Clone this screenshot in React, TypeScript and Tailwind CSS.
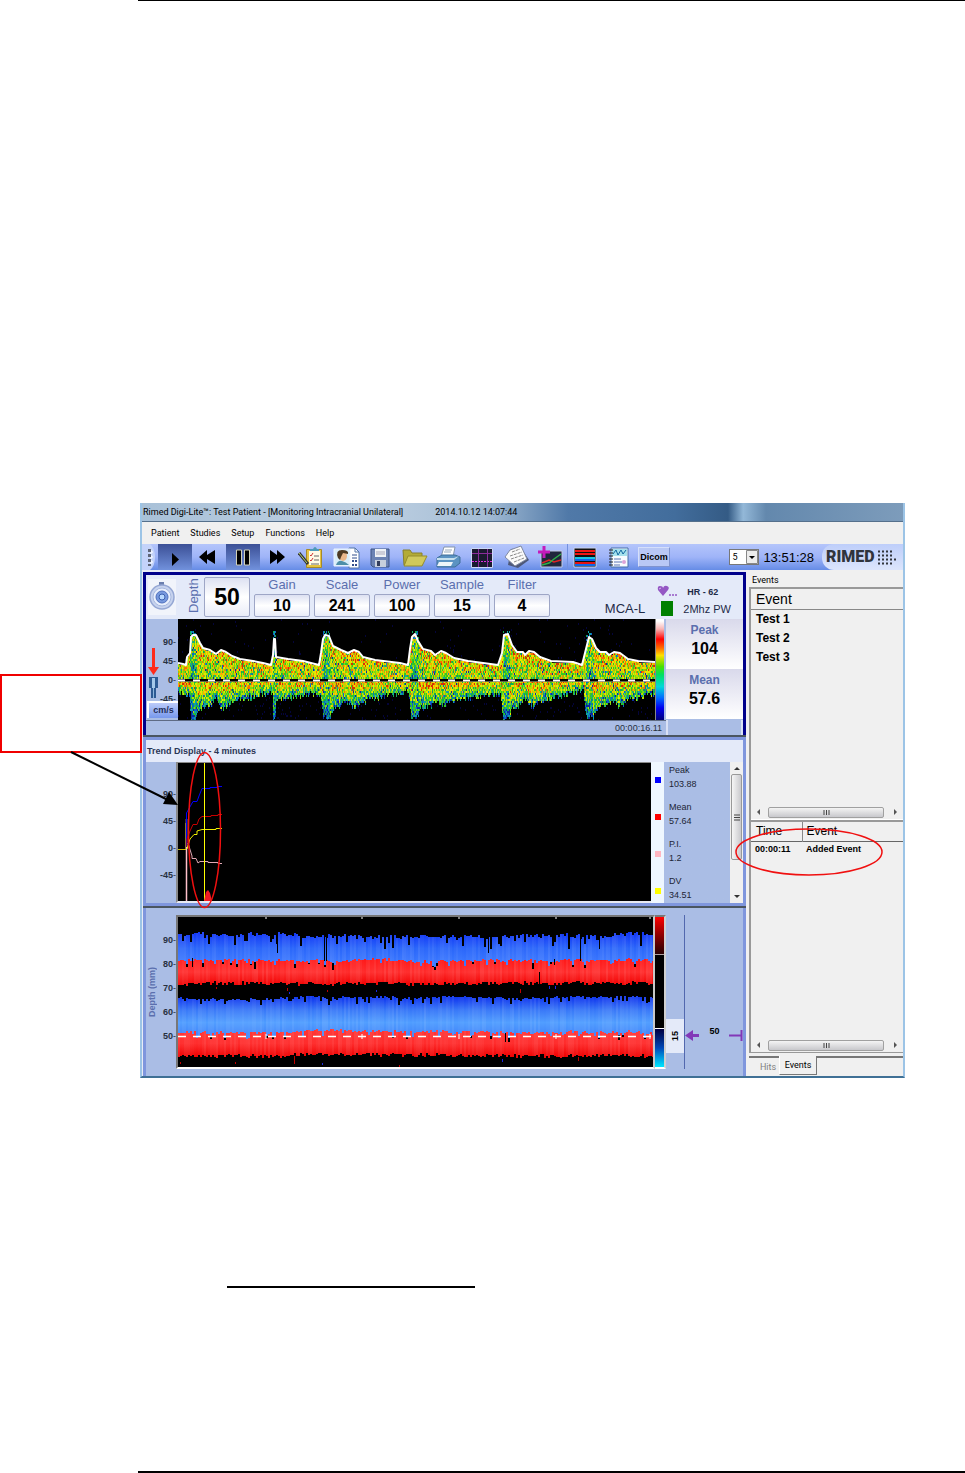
import React from 'react';

// Small seeded generator so the traces look the same on every load
function createRandom(seed: number) {
  let s = seed;
  return () => {
    s = (s * 1664525 + 1013904223) % 4294967296;
    return s / 4294967296;
  };
}

type Point = [number, number];

function valueAt(points: Point[], x: number) {
  for (let i = 1; i < points.length; i++) {
    if (x <= points[i][0]) {
      const [x0, y0] = points[i - 1];
      const [x1, y1] = points[i];
      return y0 + ((y1 - y0) * (x - x0)) / (x1 - x0);
    }
  }
  return points[points.length - 1][1];
}

const peakEnvelope: Point[] = [
  [0, 44], [5, 45], [8, 46], [9, 38], [12, 34], [13, 18], [15, 16], [18, 16], [22, 24], [25, 29], [32, 31], [38, 35], [43, 31], [48, 33], [54, 37], [62, 40], [75, 42],
  [85, 44], [93, 46], [95, 36], [96, 20], [97, 20], [98, 38], [110, 40], [125, 42], [141, 46], [143, 34], [145, 20], [147, 16], [151, 17], [155, 27],
  [163, 31], [170, 34], [176, 31], [181, 33], [185, 38], [197, 41], [222, 44], [230, 46], [232, 30], [234, 18], [237, 15], [240, 22], [245, 30], [253, 32],
  [257, 36], [263, 32], [268, 34], [276, 39], [290, 42], [305, 44], [320, 46], [324, 34], [326, 16], [330, 15], [334, 26], [339, 33], [345, 33], [347, 36],
  [351, 32], [356, 33], [362, 38], [373, 42], [395, 43], [404, 46], [408, 30], [411, 18], [414, 20], [418, 29], [422, 33], [428, 33], [431, 36], [436, 33], [442, 34],
  [450, 40], [460, 42], [477, 43],
];

const floorEnvelope: Point[] = [
  [0, 72], [11, 76], [13, 100], [18, 100], [20, 90], [30, 86], [38, 80], [42, 89], [55, 82], [75, 77], [94, 73], [95, 98], [97, 98],
  [98, 80], [120, 76], [142, 74], [145, 98], [151, 99], [154, 90], [162, 87], [168, 81], [175, 87], [190, 80], [210, 76], [230, 72], [233, 98],
  [240, 98], [243, 88], [252, 87], [258, 82], [266, 86], [280, 80], [305, 76], [322, 73], [325, 99], [331, 99], [334, 88], [340, 86], [346, 81],
  [353, 87], [370, 79], [388, 75], [405, 71], [408, 97], [415, 99], [418, 90], [426, 86], [432, 82], [440, 86], [455, 79], [477, 73],
];

const beats = [15, 96, 148, 237, 328, 411];

const palette = [
  '#04043a', '#0a2aa0', '#0b62c8', '#10a0a8', '#10a858', '#34c820',
  '#7cd812', '#b4e000', '#e8e400', '#f8b000', '#f47400', '#d83000',
];

function buildSpectrum() {
  const rand = createRandom(71);
  const paths: string[] = palette.map(() => '');
  for (let x = 0; x < 477; x++) {
    const top = valueAt(peakEnvelope, x);
    const bottom = valueAt(floorEnvelope, x) - 3 + rand() * 6;
    const onBeat = beats.some((b) => Math.abs(b - x) < (b === 96 ? 2 : 4));
    for (let y = 0; y < 101; y += 2) {
      let level = -1;
      if (y < top) {
        if (onBeat && y > 10 && rand() < 0.4) level = 2 + Math.floor(rand() * 3);
        else if (rand() < 0.012) level = 0;
      } else if (y <= bottom) {
        const depth = y < 62 ? (62 - y) / (62 - top) : (bottom - y) / (bottom - 61);
        const base = y < 62 ? 6 + depth * 2.6 : 3.6 + Math.min(depth, 0.8) * 6;
        level = base + (rand() + rand() - 1) * 4.3;
        if (onBeat) level -= 2;
        if (rand() < 0.08) level -= 4;
        level = Math.max(1, Math.min(11, Math.round(level)));
      } else if (rand() < 0.035) {
        level = 0;
      }
      if (level >= 0) paths[level] += `M${x}.5 ${y}v2`;
    }
  }
  return paths;
}

function columnBand(seed: number, top: number, bottom: number, rough: number) {
  const rand = createRandom(seed);
  let drift = 0;
  return Array.from({ length: 238 }, (_, i) => {
    drift = Math.max(-3, Math.min(3, drift + (rand() - 0.5) * 2));
    const spike = rand() < 0.2 ? rand() * rough * 1.3 : 0;
    const y = top + drift * 0.6 + rand() * rough * 0.5 + spike;
    const end = bottom - rand() * rough * 0.6 + drift * 0.3;
    return { x: i * 2, y: Math.round(y), h: Math.round(end - y), tint: rand() * 0.1 };
  });
}

const spectrum = buildSpectrum();
const envelopePath = 'M' + peakEnvelope.map((p) => p.join(' ')).join('L');

const bands = [
  { fill: 'url(#upperBlue)', columns: columnBand(5, 16, 50, 9) },
  { fill: 'url(#upperRed)', columns: columnBand(17, 43, 69, 6) },
  { fill: 'url(#lowerBlue)', columns: columnBand(29, 80, 122, 5) },
  { fill: 'url(#lowerRed)', columns: columnBand(43, 113, 140, 6) },
];

const parameters = [
  { id: 'gain', label: 'Gain', value: '10' },
  { id: 'scale', label: 'Scale', value: '241' },
  { id: 'power', label: 'Power', value: '100' },
  { id: 'sample', label: 'Sample', value: '15' },
  { id: 'filter', label: 'Filter', value: '4' },
];

const legend = [
  { label: 'Peak', value: '103.88', color: 'bg-[#0000ff]' },
  { label: 'Mean', value: '57.64', color: 'bg-[#ff0000]' },
  { label: 'P.I.', value: '1.2', color: 'bg-[#ffb6c1]' },
  { label: 'DV', value: '34.51', color: 'bg-[#ffff00]' },
];

function ToolButton({ label, pressed, children }: { label: string; pressed?: boolean; children: React.ReactNode }) {
  return (
    <button
      aria-label={label}
      className={`flex h-full w-[34px] items-center justify-center ${
        pressed ? 'bg-linear-to-b from-[#3c5096] to-[#7191dc]' : ''
      }`}
    >
      <svg width="28" height="24" viewBox="0 0 28 24">{children}</svg>
    </button>
  );
}

function Toolbar() {
  return (
    <div className="flex h-[26px] items-center bg-linear-to-b from-[#b4c5fb] via-[#9fb4f8] to-[#668ce6]">
      <svg className="h-full w-4 shrink-0" viewBox="0 0 16 26">
        <path d="M0 0H8Q13 4 13 13T8 26H0Z" fill="#c4d3fa" />
        <path d="M6 5h3v3H6zM6 10h3v3H6zM6 15h3v3H6zM6 20h3v2H6z" fill="#5f6678" />
        <path d="M9 7h1v2H8M9 12h1v2H8M9 17h1v2H8" stroke="#fff" fill="none" />
      </svg>
      <div className="flex h-full">
        <ToolButton label="Play" pressed>
          <path d="M11 8L18 14.500L11 21Z" />
        </ToolButton>
        <ToolButton label="Rewind">
          <path d="M4 12L12 5V10L20 5V19L12 14V19Z" />
        </ToolButton>
        <ToolButton label="Pause" pressed>
          <path d="M7.500 5h5v15h-5zM15.500 5h5v15h-5z" stroke="#d0d0b8" strokeWidth="1" />
        </ToolButton>
        <ToolButton label="Forward">
          <path d="M7 5L14 10V5L22 12L14 19V14L7 19Z" />
        </ToolButton>
      </div>
      <div className="ml-px flex h-full border-r border-[#7390de]">
        <ToolButton label="Protocol">
          <path d="M8.500 4.500H23.500V22.500H8.500Z" fill="#e6c440" stroke="#a58a2a" />
          <path d="M11 6H22V20H11Z" fill="#fffbe6" />
          <path d="M12 6V4H15Q17 0 19 4H21V6Z" fill="#4e9ab8" />
          <path d="M12 10l1 1 2-3M12 15l1 1 2-3" stroke="#c33" fill="none" />
          <path d="M16 11h5M16 15h5M13 19h8" stroke="#666" />
          <path d="M1 8L10 19" stroke="#333" strokeWidth="3" />
          <path d="M1 8L9 18" stroke="#b8d66a" />
        </ToolButton>
        <ToolButton label="Patient card">
          <path d="M17 3h6l4 4v16H17z" fill="#fff" stroke="#5577a8" />
          <path d="M23 3v4h4" stroke="#5577a8" fill="none" />
          <path d="M2 4H18V21H2Z" fill="#d9edf8" stroke="#eef3ff" />
          <path d="M4 20Q6 15 10 16T17 20Z" fill="#4e8fa8" />
          <ellipse cx="11" cy="11" rx="4" ry="5" fill="#e8b78a" />
          <path d="M6 13Q3 5 10 5T16 9L11 8L9 12L8 15Z" fill="#4d3a22" />
          <path d="M20 10h5M20 13h5" stroke="#334f8c" />
          <path d="M20 15h2v2h-2zM23 15h2v2h-2zM20 19h2v2h-2zM23 19h2v2h-2z" fill="#334f8c" />
        </ToolButton>
        <ToolButton label="Save">
          <path d="M5 4H23V22H7L5 20Z" fill="#6b83b4" stroke="#3c5484" />
          <path d="M9 4H20V12H9Z" fill="#eef2f6" />
          <path d="M10 7h9M10 9h9" stroke="#aab" />
          <path d="M9 15H20V22H9Z" fill="#c7d0dc" />
          <path d="M11 16H14V21H11Z" fill="#333f5c" />
        </ToolButton>
        <ToolButton label="Open">
          <path d="M3 5H10L12 8H22V20H4Z" fill="#b3ab36" stroke="#88802a" />
          <path d="M8 11H27L22 21H4Z" fill="#d0c95c" stroke="#958d2c" />
        </ToolButton>
        <ToolButton label="Print">
          <path d="M10 2H21L19 12H7Z" fill="#fff" stroke="#8595ab" />
          <path d="M3 13L8 10H21L26 12V18L21 22H3Z" fill="#5b93c2" stroke="#3e6e99" />
          <path d="M3 13H20L25 11L20 15H3Z" fill="#c6e0ee" />
          <path d="M5 17H19L17 21H3Z" fill="#edf5f9" />
          <path d="M11 5h7M10 7h7" stroke="#9ab" />
        </ToolButton>
        <ToolButton label="Cursors">
          <path d="M3.500 3.500H24.500V22.500H3.500Z" fill="#1a1a30" stroke="#cdd8f6" />
          <path d="M4 8.500h20" stroke="#8a2c9c" />
          <path d="M4 16.500h20" stroke="#e02ce0" strokeDasharray="2 1" />
          <path d="M10.500 4v18M19.500 4v18" stroke="#8a2c9c" />
        </ToolButton>
        <ToolButton label="Notes">
          <path d="M9 4L19 3L27 15L16 23L6 20Z" fill="#4d5878" />
          <path d="M8 5L19 1L25 14L13 21L3 12Z" fill="#fafafa" stroke="#7f89a3" />
          <path d="M10 7l8-3M8 11l12-4M9 14l12-4M12 17l10-4" stroke="#888" strokeDasharray="3 1" />
        </ToolButton>
        <ToolButton label="Add trend">
          <path d="M5 6H26V22H5Z" fill="#20273c" stroke="#c4cde6" />
          <path d="M6 18L13 15L18 17L25 15" stroke="#dc2525" strokeWidth="1.500" fill="none" />
          <path d="M6 20L13 18L18 14L25 9" stroke="#2eb148" strokeWidth="1.500" fill="none" />
          <path d="M8 1v12M2 7h12" stroke="#c41bbb" strokeWidth="3" />
        </ToolButton>
      </div>
      <div className="flex h-full">
        <ToolButton label="M-mode">
          <path d="M3 3H25V22H3Z" fill="#111" stroke="#cbd4ef" />
          <path d="M4 6h20M4 9h20" stroke="#f01616" strokeWidth="2" />
          <path d="M4 13h20" stroke="#18c6e6" strokeWidth="2" />
          <path d="M4 15h20M4 20h20" stroke="#0d65e8" strokeWidth="2" />
          <path d="M4 18h20" stroke="#e41212" strokeWidth="2" />
        </ToolButton>
        <ToolButton label="Report">
          <path d="M6 3H23V22H6Z" fill="#f7fbff" stroke="#4670a8" />
          <path d="M7 4H22V11H7Z" fill="#a5e0ec" />
          <path d="M8 9l3-4 2 5 3-5 2 4 3-4" stroke="#1267a2" fill="none" />
          <path d="M9 14h7M9 17h8M9 20h6" stroke="#5d76b5" />
          <path d="M4 5h4M4 8h4M4 11h4M4 14h4M4 17h4M4 20h4" stroke="#222" />
          <circle cx="19" cy="17" r="2" fill="#dca3d8" />
        </ToolButton>
      </div>
      <button className="ml-0.5 h-5 w-8 border border-[#8094cf] border-t-[#d5dffb] border-l-[#d5dffb] bg-[#b9c8f5] text-[9px] leading-none font-bold">
        Dicom
      </button>
      <div className="ml-auto flex h-full items-center">
        <div className="relative flex">
          <select
            aria-label="Display seconds"
            defaultValue="5"
            className="h-4 w-[30px] appearance-none border border-[#777] bg-white pl-0.5 font-['Roboto',sans-serif] text-[9px] leading-none"
          >
            <option>5</option>
            <option>10</option>
          </select>
          <svg className="pointer-events-none absolute top-px right-px" width="12" height="14" viewBox="0 0 12 14">
            <path d="M0.500 0.500H11.500V13.500H0.500Z" fill="#ececec" stroke="#888" />
            <path d="M3 6H9L6 9Z" />
          </svg>
        </div>
        <time className="mr-2 ml-1 text-[13px] leading-none">13:51:28</time>
        <div className="flex h-full w-[81px] items-center justify-between rounded-l-xl bg-linear-to-b from-[#becefa] to-[#dce5fc] pr-1.5 pl-1 text-[#30343c]">
          <span className="font-['Roboto',sans-serif] text-[16px] leading-none font-black">RIMED</span>
          <svg className="shrink-0" width="19" height="15" viewBox="0 0 19 15">
            <path
              d="M0 1.500h14M0 5.500h14M0 9.500h18M0 13.500h14"
              stroke="currentColor"
              strokeWidth="2"
              strokeDasharray="2 2"
            />
          </svg>
        </div>
      </div>
    </div>
  );
}

function Axis({ labels, className, rowClass }: { labels: string[]; className: string; rowClass: string }) {
  return (
    <div className={`text-right text-[9px] font-bold text-[#26303f] ${className}`}>
      {labels.map((label) => (
        <div key={label} className={`flex items-center justify-end ${rowClass}`}>
          {label}
          <span className="font-normal">-</span>
        </div>
      ))}
    </div>
  );
}

function SpectrumPanel() {
  return (
    <section className="border-x-[3px] border-t-[3px] border-[#00008b] bg-[#aabde5]">
      <div className="flex h-11 items-start bg-[#e4eaf9] pl-0.5">
        <button aria-label="Sound" className="mt-1 flex h-9 w-7 items-center justify-center bg-[#f1f4fb]">
          <svg width="28" height="30" viewBox="0 0 28 30">
            <path d="M11 0h5v4h-5z" fill="#6b7fae" />
            <circle cx="14" cy="15" r="12" fill="#c7d3ee" stroke="#95a7d4" strokeWidth="1.500" />
            <circle cx="14" cy="15" r="9" fill="#e9effc" stroke="#a8b9df" />
            <circle cx="14" cy="15" r="6" fill="#7799de" stroke="#4f70bd" />
            <circle cx="14" cy="15" r="3" fill="#b8d8ff" stroke="#3c60ae" />
          </svg>
        </button>
        <label
          htmlFor="depth"
          className="ml-2.5 flex h-[42px] w-4 rotate-180 items-center justify-center text-[13px] leading-4 text-[#5b6fae] [writing-mode:vertical-rl]"
        >
          Depth
        </label>
        <input
          id="depth"
          defaultValue="50"
          className="mt-0.5 ml-0.5 h-10 w-[46px] rounded-xs border border-[#9ea6c6] bg-linear-to-b from-[#dde1f2] via-white to-[#e9ecf8] text-center text-[23px] font-bold"
        />
        <div className="ml-1 flex gap-1">
          {parameters.map((p) => (
            <div key={p.id} className="flex w-14 flex-col items-center pt-px">
              <label htmlFor={p.id} className="text-[13px] leading-[18px] text-[#5b6fae]">{p.label}</label>
              <input
                id={p.id}
                defaultValue={p.value}
                className="h-[23px] w-full rounded-xs border border-[#9ea6c6] bg-linear-to-b from-[#dde1f2] via-white to-[#e9ecf8] text-center text-[16px] leading-none font-bold"
              />
            </div>
          ))}
        </div>
        <div className="ml-auto flex h-full items-end gap-3 pr-3 pb-0.5 text-[#1e2b48]">
          <span className="text-[13px] leading-4">MCA-L</span>
          <div className="grid grid-cols-[22px_auto] gap-x-1 gap-y-px">
            <svg width="20" height="14" viewBox="0 0 20 14">
              <path d="M6 12L1 6Q0 2 3 2T6 4Q7 1 10 2T11 6Z" fill="#9457c4" />
              <path d="M4 4L2 5" stroke="#d9b7ef" />
              <path d="M12 11h2M15 11h2M18 11h2" stroke="#9457c4" strokeWidth="1.500" />
            </svg>
            <span className="pl-1 text-[9px] leading-4 font-bold">HR - 62</span>
            <div className="ml-1 h-[15px] w-3 bg-[#008000]" />
            <span className="text-[11px] leading-4">2Mhz PW</span>
          </div>
        </div>
      </div>
      <div className="flex h-[101px]">
        <div className="relative w-8 shrink-0 overflow-hidden">
          <Axis labels={['90', '45', '0', '-45']} className="pt-3.5 pr-0.5" rowClass="h-[19px]" />
          <svg className="absolute top-7 left-0.5" width="12" height="54" viewBox="0 0 12 54">
            <path d="M4 1H7V20H11L5.500 28L0 20H4Z" fill="#ff2a1a" />
            <path d="M1 30H10V41H8V51H3V41H1Z" fill="#2c5a94" />
            <path d="M4 31H7V41H4Z" fill="#a4c8ea" />
            <path d="M5 41H6V51H5Z" fill="#8db6de" />
          </svg>
          <button className="absolute bottom-0.5 left-px h-[17px] w-[31px] border-t-2 border-l-2 border-white bg-linear-to-b from-[#bccbfa] to-[#7898ec] text-[9px] leading-none font-bold text-[#1f2c55]">
            cm/s
          </button>
        </div>
        <svg className="h-full min-w-0 flex-1 bg-black" viewBox="0 0 477 101" preserveAspectRatio="none">
          <g shapeRendering="crispEdges">
            {spectrum.map((d, i) => (
              <path key={i} d={d} stroke={palette[i]} strokeWidth="1" />
            ))}
          </g>
          <path d={envelopePath} fill="none" stroke="#fff" strokeWidth="2" strokeLinejoin="round" />
          <path d="M0 61.500H477" stroke="#000" strokeWidth="3" />
          <path d="M0 61.500H477" stroke="#fff" strokeWidth="2" strokeDasharray="7 8" />
          <path d="M0 62.500H477" stroke="#c8c890" strokeWidth="0.500" />
        </svg>
        <div className="mr-0.5 w-[9px] border-l border-[#888] bg-[linear-gradient(#fff_2%,#f9b4b4_10%,#f00_20%,#ff7000_29%,#ffe000_36%,#4be000_47%,#00e060_55%,#00d8d8_67%,#006cff_78%,#0000f0_88%,#00007a)]" />
        <dl className="flex w-[77px] flex-col text-center">
          <div className="h-[50px] bg-linear-to-b from-[#d9d9eb] to-white pt-[3px]">
            <dt className="text-[12px] leading-4 font-bold text-[#5b6fae]">Peak</dt>
            <dd className="text-[16px] leading-[22px] font-bold">104</dd>
          </div>
          <div className="h-[50px] bg-linear-to-b from-[#d9d9eb] to-white pt-[3px]">
            <dt className="text-[12px] leading-4 font-bold text-[#5b6fae]">Mean</dt>
            <dd className="text-[16px] leading-[22px] font-bold">57.6</dd>
          </div>
        </dl>
      </div>
      <div className="flex h-[15px]">
        <div className="flex-1 border-t border-[#5f6b84] pr-1 text-right text-[9px] leading-[14px] text-[#26303f]">00:00:16.11</div>
        <div className="w-[77px] border-x-2 border-[#d9e1f5]" />
      </div>
    </section>
  );
}

function TrendPanel() {
  return (
    <section className="border-[3px] border-[#7f96dd] bg-[#aabde5]">
      <h2 className="h-[22px] bg-[#e4eaf9] pl-px text-[9px] leading-[22px] font-bold text-[#2b3656]">
        Trend Display - 4 minutes
      </h2>
      <div className="flex h-[141px]">
        <Axis labels={['90', '45', '0', '-45']} className="w-[30px] shrink-0 pt-[19px]" rowClass="h-[27px]" />
        <div className="min-w-0 flex-1 border-t border-b-2 border-l-2 border-[#8a8a8a] border-b-[#e8eaf2] bg-black">
          <svg className="h-full w-[60px]" viewBox="0 0 60 138" fill="none">
            <path d="M0 86.500H8V60" stroke="#c8b800" />
            <path d="M8.500 138V56" stroke="#ffc0cb" strokeWidth="1.500" />
            <path d="M8.500 84V50L13 42L15 38.500H19L21 33L24 25.500H32V24.500H39V23.500H44" stroke="#0000ff" />
            <path d="M9 84V76L12 68L15 61.500H19L21 56L24 53.500H33V52.500H40V51.500H44" stroke="#c80000" />
            <path d="M9 86L12 76L16 71.500H19V68L24 66.500H38V65.500H44" stroke="#f0f000" />
            <path d="M10 80L14 93V95.500H18L20 100L22 98.500H30V99.500H40V100.500H44" stroke="#e0a8b4" />
            <path d="M26.500 0V138" stroke="#ff0" />
            <path d="M26 138L28 129L30 127L32 130L34 138Z" fill="#f01c24" />
          </svg>
        </div>
        <div className="flex w-[79px] bg-linear-to-r from-[#eff7ff] from-[13px] to-[#aabde5] to-[13px] pt-px">
          <ul>
            {legend.map((item) => (
              <li key={item.label} className="flex h-[37px] items-start">
                <i className={`mt-3.5 ml-1 h-1.5 w-1.5 ${item.color}`} />
                <div className="ml-2 text-[9px] leading-[14px] text-[#1d2535]">
                  <div>{item.label}</div>
                  <div>{item.value}</div>
                </div>
              </li>
            ))}
          </ul>
        </div>
        <div className="flex w-[13px] flex-col items-center justify-between bg-[#f0f0f0] py-1">
          <svg width="6" height="4" viewBox="0 0 6 4"><path d="M0 4L3 1L6 4Z" fill="#333" /></svg>
          <div className="mt-1 mb-auto flex h-[86px] w-[11px] items-center justify-center rounded-xs border border-[#999] bg-linear-to-r from-[#f6f6f6] to-[#c9c9cd]">
            <svg width="6" height="7" viewBox="0 0 6 7"><path d="M0 1h6M0 3.500h6M0 6h6" stroke="#444" /></svg>
          </div>
          <svg width="6" height="4" viewBox="0 0 6 4"><path d="M0 0L3 3L6 0Z" fill="#333" /></svg>
        </div>
      </div>
    </section>
  );
}

function DepthPanel() {
  return (
    <section className="flex flex-1 border-x-[3px] border-[#7f96dd] bg-[#aabde5] pt-[7px]">
      <div className="flex h-[154px] w-[30px] shrink-0 items-center">
        <span className="w-3 rotate-180 text-[9px] leading-3 font-bold text-[#5b6fae] [writing-mode:vertical-rl]">
          Depth (mm)
        </span>
        <Axis labels={['90', '80', '70', '60', '50']} className="w-[18px] self-start pt-3.5" rowClass="h-6" />
      </div>
      <div className="h-[154px] min-w-0 flex-1 border-2 border-t-[#777] border-r-[#c8c8c8] border-b-white border-l-[#777] bg-black">
        <svg className="h-full w-full" viewBox="0 0 475 150" preserveAspectRatio="none">
          <defs>
            <linearGradient id="upperBlue" gradientUnits="userSpaceOnUse" x1="0" y1="17" x2="0" y2="46">
              <stop offset="0" stopColor="#1238f5" />
              <stop offset="0.500" stopColor="#2a66fa" />
              <stop offset="1" stopColor="#3a78ff" />
            </linearGradient>
            <linearGradient id="upperRed" gradientUnits="userSpaceOnUse" x1="0" y1="42" x2="0" y2="68">
              <stop offset="0" stopColor="#ff1818" />
              <stop offset="0.500" stopColor="#ff2c2c" />
              <stop offset="1" stopColor="#f00000" />
            </linearGradient>
            <linearGradient id="lowerBlue" gradientUnits="userSpaceOnUse" x1="0" y1="81" x2="0" y2="116">
              <stop offset="0" stopColor="#1138ee" />
              <stop offset="0.350" stopColor="#3878f8" />
              <stop offset="0.700" stopColor="#4f9dff" />
              <stop offset="1" stopColor="#4388fa" />
            </linearGradient>
            <linearGradient id="lowerRed" gradientUnits="userSpaceOnUse" x1="0" y1="113" x2="0" y2="140">
              <stop offset="0" stopColor="#ff3434" />
              <stop offset="0.500" stopColor="#ff2c2c" />
              <stop offset="1" stopColor="#ee0000" />
            </linearGradient>
          </defs>
          <g shapeRendering="crispEdges">
            {bands.map((band) =>
              band.columns.map((c) => (
                <React.Fragment key={band.fill + c.x}>
                  <rect x={c.x} y={c.y} width="2" height={c.h} fill={band.fill} />
                  <rect x={c.x} y={c.y} width="2" height={c.h} fill="#fff" opacity={c.tint} />
                </React.Fragment>
              )),
            )}
            <path d="M14 41v9M99 20v16M146 18v26M148 20v24M310 20v16M361 55v12M402 20v24M421 20v12M327 116v9M376 42v6" stroke="#000" />
            <path d="M38 70v2M109 71v3M149 73v2M342 72v4M116 139v8M400 140v4M221 148v2M2 145v2M57 145v2" stroke="#c00000" />
            <path d="M111 75v2M198 73v2M371 69v3M377 69v3M144 146v2M324 142v3" stroke="#1c28e0" />
          </g>
          <path d="M0 119.500H475" stroke="#fff" strokeWidth="1.500" strokeDasharray="8 7" />
          <path d="M88 117v5M184 117v5M281 117v5M378 117v5M472 117v5M88 0v2M184 0v2M281 0v2M378 0v2M472 0v2" stroke="#fff" />
        </svg>
      </div>
      <div className="flex h-[154px] w-[11px] flex-col border-y-2 border-r-2 border-t-[#777] border-r-[#d0d0d0] border-b-white">
        <div className="h-[38px] border-b border-[#b0a0a0] bg-linear-to-b from-[#ff0000] to-[#2a0000]" />
        <div className="flex-1 bg-black" />
        <div className="h-[39px] border-t border-white bg-linear-to-b from-[#000040] via-[#0048b8] to-[#00e8ff]" />
      </div>
      <div className="flex h-[154px] w-[77px] items-end">
        <div className="mb-4 flex h-[34px] w-[18px] items-center justify-center bg-[#e4eaf9]">
          <span className="rotate-180 text-[9px] leading-none font-bold [writing-mode:vertical-rl]">15</span>
        </div>
        <div className="flex h-full flex-1 items-end justify-between border-l border-[#5268ae] pb-7">
          <svg width="15" height="11" viewBox="0 0 15 11">
            <path d="M0 5.500L8 0V4H14V7H8V11Z" fill="#8238b8" />
          </svg>
          <span className="mb-1 text-[9px] leading-[12px] font-bold">50</span>
          <svg width="14" height="11" viewBox="0 0 14 11">
            <path d="M0 5.500H12M12.500 0V11" stroke="#8238b8" strokeWidth="2" />
          </svg>
        </div>
      </div>
    </section>
  );
}

function HorizontalScroll() {
  return (
    <div className="flex h-3 items-center gap-2 px-[5px]">
      <svg width="4" height="6" viewBox="0 0 4 6"><path d="M4 0L1 3L4 6Z" fill="#555" /></svg>
      <div className="flex h-[11px] flex-1 items-center justify-center rounded-xs border border-[#a0a0a0] bg-linear-to-b from-[#f4f4f4] to-[#c8c8cc]">
        <svg width="7" height="5" viewBox="0 0 7 5"><path d="M1 0v5M3.500 0v5M6 0v5" stroke="#444" /></svg>
      </div>
      <svg className="ml-0.5" width="4" height="6" viewBox="0 0 4 6"><path d="M0 0L3 3L0 6Z" fill="#555" /></svg>
    </div>
  );
}

function EventsPanel() {
  return (
    <aside className="flex w-[157px] shrink-0 flex-col bg-[#f0f0f0] pl-[3px]">
      <h2 className="h-[17px] pt-1 pl-[3px] font-['Roboto',sans-serif] text-[9px] leading-3">Events</h2>
      <div className="flex h-[233px] flex-col border-t-2 border-l-2 border-[#999]">
        <table className="w-full border-collapse text-left">
          <thead>
            <tr className="h-5 border-b border-[#888] text-[14px] leading-none">
              <th className="pl-[5px] font-normal">Event</th>
            </tr>
          </thead>
          <tbody className="text-[12px] leading-none font-bold">
            {['Test 1', 'Test 2', 'Test 3'].map((name) => (
              <tr key={name} className="h-[19px]">
                <td className="pl-[5px]">{name}</td>
              </tr>
            ))}
          </tbody>
        </table>
        <div className="mt-auto border-b border-white pb-px">
          <HorizontalScroll />
        </div>
      </div>
      <div className="flex flex-1 flex-col border-t-2 border-b border-l-2 border-[#999]">
        <table className="w-full table-fixed border-collapse text-left">
          <thead>
            <tr className="h-[19px] border-b border-[#666] text-[12px] leading-none">
              <th className="w-[51px] border-r border-[#888] pl-[5px] font-normal">Time</th>
              <th className="pl-1 font-normal">Event</th>
            </tr>
          </thead>
          <tbody className="text-[9px] leading-none font-bold">
            <tr className="h-4">
              <td className="pl-1">00:00:11</td>
              <td className="pl-1">Added Event</td>
            </tr>
          </tbody>
        </table>
        <div className="mt-auto pb-px">
          <HorizontalScroll />
        </div>
      </div>
      <div className="mt-[3px] flex h-5 border-t-2 border-[#777] pl-2 font-['Roboto',sans-serif] text-[9px] leading-none">
        <button className="w-[22px] text-[#808080]">Hits</button>
        <button className="-mt-0.5 h-[19px] w-[38px] border-r border-b border-l border-[#777] border-l-white bg-[#f0f0f0]">Events</button>
      </div>
    </aside>
  );
}

export default function App() {
  return (
    <div className="flex min-h-screen flex-col bg-white font-['Liberation_Sans',Arial,sans-serif] text-black">
      <hr className="ml-[138px] border-t border-black" />
      <figure className="relative mt-[502px] pr-[60px] pl-[140px]">
        <div className="border-r-2 border-b-2 border-l-2 border-[#9cc4e6] border-b-[#3f7095]">
          <header className="flex h-[18px] items-center bg-[linear-gradient(90deg,#a9c1d8,#bed0e2_30%,#a5bdd5_45%,#5079a8_56%,#426d9c_70%,#345b85_77%,#93b8d8_79%,#6388ad_82%,#7d9cbb)] pl-px font-['Roboto',sans-serif] text-[9px] leading-none">
            <h1>Rimed Digi-Lite™: Test Patient - [Monitoring Intracranial Unilateral]</h1>
            <span className="ml-8">2014.10.12 14:07:44</span>
          </header>
          <nav className="flex h-[23px] items-center gap-[11px] border-t border-[#55708c] bg-[#f0f0f0] pl-[9px] font-['Roboto',sans-serif] text-[9px] leading-none">
            {['Patient', 'Studies', 'Setup', 'Functions', 'Help'].map((item) => (
              <a key={item} href="#">{item}</a>
            ))}
          </nav>
          <Toolbar />
          <div className="flex h-[506px]">
            <div className="flex min-w-0 flex-1 flex-col bg-[#e8ecf6] pt-0.5 pl-px">
              <SpectrumPanel />
              <div className="h-0.5 bg-[#4a5560]" />
              <TrendPanel />
              <div className="h-0.5 bg-[#4a5560]" />
              <DepthPanel />
            </div>
            <EventsPanel />
          </div>
        </div>

        {/* callout box, its arrow and the two highlight rings lie over the window */}
        <div className="absolute top-[171px] left-0 h-[79px] w-[142px] border-2 border-[#f00000] bg-white" />
        <svg className="pointer-events-none absolute top-0 left-0" width="260" height="575" viewBox="0 503 260 575" fill="none">
          <path d="M71 752L168 800" stroke="#000" strokeWidth="2" />
          <path d="M178 805L163 804L169 792Z" fill="#000" />
          <ellipse cx="204.500" cy="830" rx="16" ry="77.500" stroke="#f01010" strokeWidth="1.500" />
        </svg>
        <svg className="pointer-events-none absolute top-[325px] right-[82px]" width="148" height="48" viewBox="0 0 148 48" fill="none">
          <ellipse cx="74" cy="24" rx="73" ry="23" stroke="#f01010" strokeWidth="1.500" />
        </svg>
      </figure>
      <hr className="mt-[208px] ml-[227px] w-[248px] border-t-2 border-black" />
      <hr className="mt-auto ml-[138px] border-t-2 border-black" />
    </div>
  );
}
